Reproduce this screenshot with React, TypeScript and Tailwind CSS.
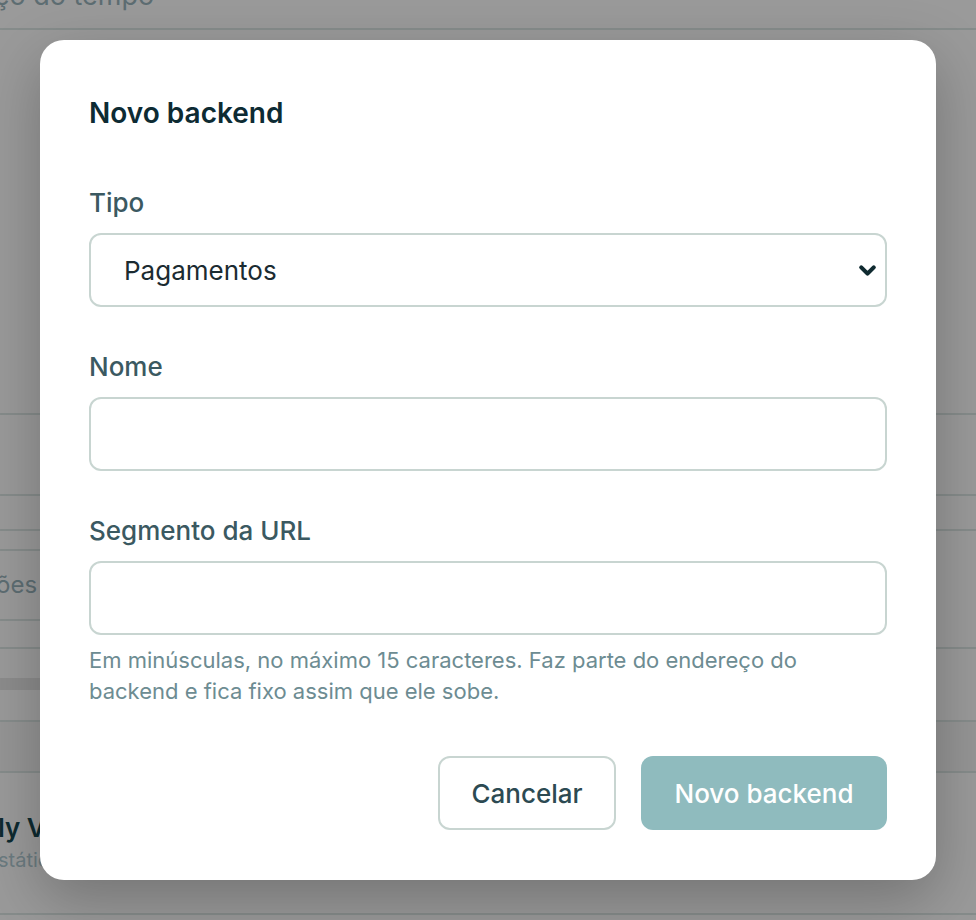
import { ChevronDown } from "lucide-react";

const font = { fontFamily: "Inter, 'Noto Sans', sans-serif" };

function Backdrop() {
  return (
    <div className="flex h-[920px] w-full flex-col overflow-hidden bg-[#9a9a9a] text-[#5d6d72]">
      <div className="flex h-[30px] shrink-0 flex-col justify-start overflow-hidden border-b-2 border-[#868c8b]">
        <p className="-mt-[20px] -ml-[6px] whitespace-nowrap text-[27px] leading-[32px]">ço do tempo</p>
      </div>
      <div className="h-[385px] shrink-0 border-b-2 border-[#868c8b]" />
      <div className="h-[81px] shrink-0 border-b-2 border-[#868c8b]" />
      <div className="h-[35px] shrink-0 border-b-2 border-[#868c8b]" />
      <div className="h-[118px] shrink-0 border-b-2 border-[#868c8b] pt-[18px]">
        <div className="flex h-[72px] w-[60px] items-center overflow-hidden border-y-2 border-[#868c8b]">
          <span className="-ml-[4px] text-[24px]">ões</span>
        </div>
      </div>
      <div className="h-[73px] shrink-0 border-b-2 border-[#868c8b] pt-[29px]">
        <div className="h-[12px] w-[60px] bg-[#8c8c8c]" />
      </div>
      <div className="h-[51px] shrink-0 border-b-2 border-[#868c8b] bg-[#959595]" />
      <div className="flex h-[142px] shrink-0 flex-col overflow-hidden border-b-2 border-[#868c8b] pt-[38px]">
        <p className="-ml-[38px] whitespace-nowrap text-[26px] font-semibold leading-[34px] text-[#0d2a30]">Only Vercel</p>
        <p className="-ml-[14px] whitespace-nowrap text-[20px] leading-[30px] text-[#6b7b80]">Estático</p>
      </div>
    </div>
  );
}

function Field({ label, children }: { label: string; children: React.ReactNode }) {
  return (
    <div className="flex flex-col gap-[14px]">
      <label className="text-[26px] font-medium leading-[32px] text-[#3b5961]">{label}</label>
      {children}
    </div>
  );
}

export default function App() {
  return (
    <div className="relative h-[920px] w-[976px]" style={font}>
      <Backdrop />
      <div className="absolute inset-0 flex items-center justify-center">
        <div className="flex h-[840px] w-[896px] flex-col rounded-[24px] bg-white px-[49px] pt-[55px] shadow-[0_20px_60px_rgba(0,0,0,0.25)]">
          <h2 className="text-[28px] font-semibold leading-[36px] text-[#0d2b33]">Novo backend</h2>
          <div className="mt-[56px] flex flex-col gap-[44px]">
            <Field label="Tipo">
              <div className="flex h-[74px] items-center justify-between rounded-[12px] border-2 border-[#c8d5d1] pl-[33px] pr-[5px]">
                <span className="text-[26px] text-[#1b2b31]">Pagamentos</span>
                <ChevronDown size={25} strokeWidth={4} className="text-[#0f2a30]" />
              </div>
            </Field>
            <Field label="Nome">
              <div className="h-[74px] rounded-[12px] border-2 border-[#c8d5d1]" />
            </Field>
            <div className="flex flex-col">
              <Field label="Segmento da URL">
                <div className="h-[74px] rounded-[12px] border-2 border-[#c8d5d1]" />
              </Field>
              <p className="mt-[10px] text-[22px] leading-[31px] text-[#6d8c92]">
                Em minúsculas, no máximo 15 caracteres. Faz parte do endereço do backend e fica fixo assim que ele sobe.
              </p>
            </div>
          </div>
          <div className="mt-[49px] flex justify-end gap-[25px]">
            <button className="h-[74px] w-[178px] rounded-[12px] border-2 border-[#c8d5d1] text-[26px] font-medium text-[#2c4a52]">
              Cancelar
            </button>
            <button className="h-[74px] w-[246px] rounded-[12px] bg-[#8fbbbe] text-[26px] font-medium text-white">
              Novo backend
            </button>
          </div>
        </div>
      </div>
    </div>
  );
}
